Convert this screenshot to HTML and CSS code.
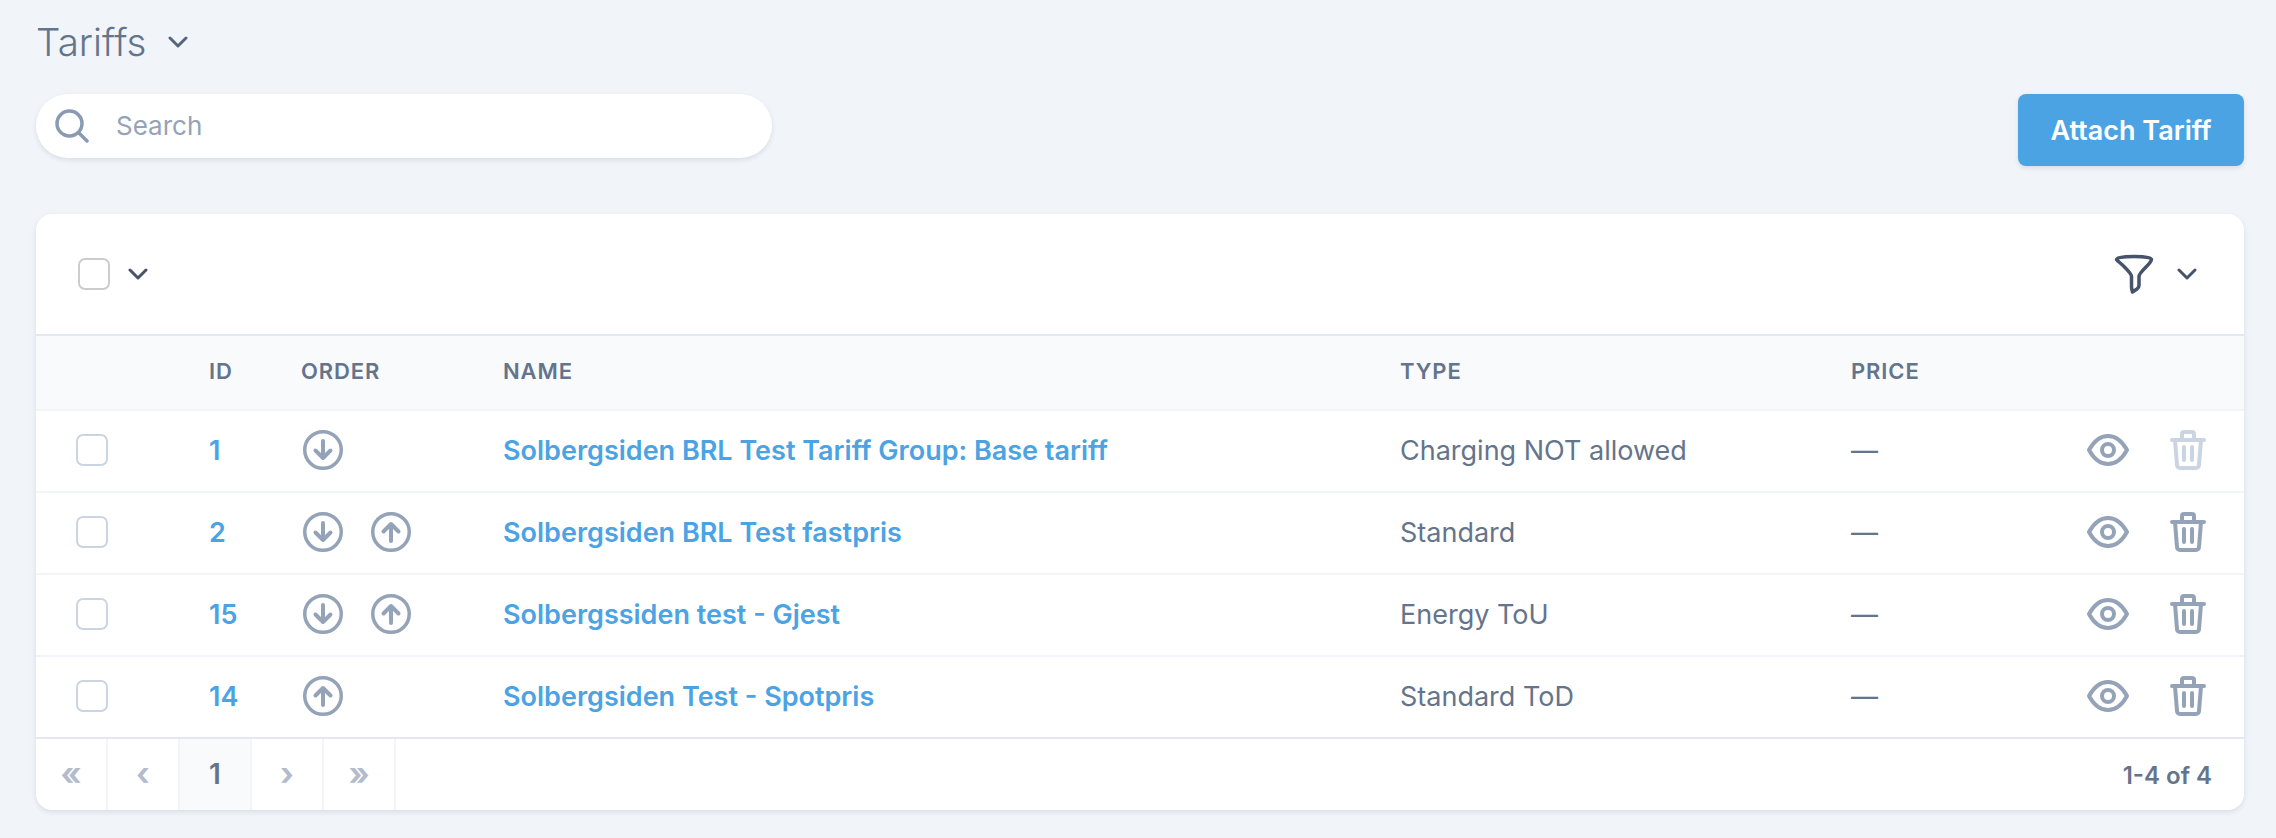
FILE: index.html
```html
<!DOCTYPE html>
<html lang="en">
<head>
<meta charset="utf-8">
<title>Tariffs</title>
<link rel="stylesheet" href="styles.css">
</head>
<body>
<svg class="defs" width="0" height="0" aria-hidden="true">
  <symbol id="down" viewBox="0 0 40 40"><circle cx="20" cy="20" r="18.250" fill="none" stroke="currentColor" stroke-width="3.500"/><path d="M20 11v17M12.500 20.500 20 28l7.500-7.500" fill="none" stroke="currentColor" stroke-width="4" stroke-linecap="round" stroke-linejoin="round"/></symbol>
  <symbol id="up" viewBox="0 0 40 40"><circle cx="20" cy="20" r="18.250" fill="none" stroke="currentColor" stroke-width="3.500"/><path d="M20 29V12M12.500 19.500 20 12l7.500 7.500" fill="none" stroke="currentColor" stroke-width="4" stroke-linecap="round" stroke-linejoin="round"/></symbol>
  <symbol id="eye" viewBox="0 0 42 32"><path d="M2 16C7 7 13 2 21 2s14 5 19 14c-5 9-11 14-19 14S7 25 2 16z" fill="none" stroke="currentColor" stroke-width="4" stroke-linejoin="round"/><circle cx="21" cy="16" r="6" fill="none" stroke="currentColor" stroke-width="4"/></symbol>
  <symbol id="trash" viewBox="0 0 36 40"><path d="M2 10h32M12 9V4a2 2 0 0 1 2-2h8a2 2 0 0 1 2 2v5M5 10l2 25a3 3 0 0 0 3 3h16a3 3 0 0 0 3-3l2-25M14 17v13M22 17v13" fill="none" stroke="currentColor" stroke-width="4" stroke-linecap="round" stroke-linejoin="round"/></symbol>
  <symbol id="chev" viewBox="0 0 20 12"><path d="M2 2l8 8 8-8" fill="none" stroke="currentColor" stroke-width="3" stroke-linecap="round" stroke-linejoin="round"/></symbol>
</svg>

<header class="title-row">
  <h1 class="title">Tariffs</h1>
  <svg class="title-chev"><use href="#chev"/></svg>
</header>

<div class="action-row">
  <label class="search">
    <svg class="search-icon" viewBox="0 0 34 34"><circle cx="14.500" cy="14.500" r="12.500" fill="none" stroke="currentColor" stroke-width="3.500"/><path d="M23.500 23.500 32 32" fill="none" stroke="currentColor" stroke-width="3.500" stroke-linecap="round"/></svg>
    <input class="search-input" type="text" placeholder="Search">
  </label>
  <button class="attach" type="button">Attach Tariff</button>
</div>

<section class="card">
  <div class="toolbar">
    <div class="toolbar-side">
      <span class="check"></span>
      <svg class="tool-chev"><use href="#chev"/></svg>
    </div>
    <div class="toolbar-side filter-side">
      <svg class="filter" viewBox="0 0 40 40"><path d="M2.500 5.500C2.500 3.500 9 2.500 20 2.500s17.500 1 17.500 3c0 2-2 4-5.500 7.500-4 4-7 7-7 9.500v9c0 1.500-.5 2.500-2 3.500l-4.500 3c-.5-2-1-3.500-1-5.500v-10c0-2.500-3-5.500-7-9.500-3.500-3.500-7-6-8-7.500z" fill="none" stroke="currentColor" stroke-width="3.500" stroke-linejoin="round"/></svg>
      <svg class="tool-chev"><use href="#chev"/></svg>
    </div>
  </div>

  <table class="grid">
    <colgroup>
      <col class="c-check"><col class="c-id"><col class="c-order"><col class="c-name"><col class="c-type"><col class="c-price"><col class="c-act">
    </colgroup>
    <thead>
      <tr><th></th><th>ID</th><th>ORDER</th><th>NAME</th><th>TYPE</th><th>PRICE</th><th></th></tr>
    </thead>
    <tbody>
      <tr>
        <td><span class="check row-check"></span></td>
        <td><a class="id">1</a></td>
        <td><div class="order"><svg class="ico"><use href="#down"/></svg></div></td>
        <td><a class="name">Solbergsiden BRL Test Tariff Group: Base tariff</a></td>
        <td>Charging NOT allowed</td>
        <td>—</td>
        <td><div class="acts"><svg class="eye"><use href="#eye"/></svg><svg class="trash off"><use href="#trash"/></svg></div></td>
      </tr>
      <tr>
        <td><span class="check row-check"></span></td>
        <td><a class="id">2</a></td>
        <td><div class="order"><svg class="ico"><use href="#down"/></svg><svg class="ico"><use href="#up"/></svg></div></td>
        <td><a class="name">Solbergsiden BRL Test fastpris</a></td>
        <td>Standard</td>
        <td>—</td>
        <td><div class="acts"><svg class="eye"><use href="#eye"/></svg><svg class="trash"><use href="#trash"/></svg></div></td>
      </tr>
      <tr>
        <td><span class="check row-check"></span></td>
        <td><a class="id">15</a></td>
        <td><div class="order"><svg class="ico"><use href="#down"/></svg><svg class="ico"><use href="#up"/></svg></div></td>
        <td><a class="name">Solbergssiden test - Gjest</a></td>
        <td>Energy ToU</td>
        <td>—</td>
        <td><div class="acts"><svg class="eye"><use href="#eye"/></svg><svg class="trash"><use href="#trash"/></svg></div></td>
      </tr>
      <tr>
        <td><span class="check row-check"></span></td>
        <td><a class="id">14</a></td>
        <td><div class="order"><svg class="ico"><use href="#up"/></svg></div></td>
        <td><a class="name">Solbergsiden Test - Spotpris</a></td>
        <td>Standard ToD</td>
        <td>—</td>
        <td><div class="acts"><svg class="eye"><use href="#eye"/></svg><svg class="trash"><use href="#trash"/></svg></div></td>
      </tr>
    </tbody>
  </table>

  <footer class="pager">
    <nav class="pages">
      <span class="page dim">«</span>
      <span class="page dim">‹</span>
      <span class="page current">1</span>
      <span class="page dim">›</span>
      <span class="page dim">»</span>
    </nav>
    <span class="count">1-4 of 4</span>
  </footer>
</section>
</body>
</html>
```

FILE: styles.css
```css
* { box-sizing: border-box; }
html, body { margin: 0; height: 100%; }
body {
  background: #f1f5fa;
  color: #64748b;
  font-family: Inter, "Noto Sans", sans-serif;
  padding: 0 32px 0 36px;
  overflow: hidden;
}
.defs { position: absolute; }
.title-row { display: flex; align-items: center; height: 84px; gap: 22px; }
.title { margin: 0; font-size: 38.500px; font-weight: 300; color: #64748b; line-height: 1; }
.title-chev { width: 20px; height: 12px; color: #56657e; }

.action-row { display: flex; justify-content: space-between; align-items: flex-start; height: 130px; padding-top: 10px; }
.search {
  display: flex; align-items: center; width: 736px; height: 64px;
  background: #fff; border-radius: 32px;
  box-shadow: 0 2px 5px rgba(30, 50, 80, .12);
  padding-left: 19px;
}
.search-icon { width: 34px; height: 34px; color: #8a9ab3; flex: none; }
.search-input {
  border: 0; outline: 0; background: transparent; flex: 1;
  font: 400 26px Inter, sans-serif; margin-left: 27px; color: #64748b; padding: 0 0 2px;
}
.search-input::placeholder { color: #94a3b8; opacity: 1; }
.attach {
  width: 226px; height: 72px; border: 0; border-radius: 8px;
  background: #4ca3e4; color: #fff;
  font: 600 27px Inter, sans-serif;
  box-shadow: 0 2px 5px rgba(30, 50, 80, .12);
  padding: 0;
}

.card { background: #fff; border-radius: 16px; box-shadow: 0 2px 5px rgba(30, 50, 80, .12); overflow: hidden; height: 596px; }
.toolbar { display: flex; justify-content: space-between; align-items: center; height: 122px; border-bottom: 2px solid #e3e8f0; padding: 0 47px 0 42px; }
.toolbar-side { display: flex; align-items: center; gap: 18px; }
.filter-side { gap: 23px; }
.check { display: block; width: 32px; height: 32px; border: 2px solid #ccc; border-radius: 7px; background: #fff; }
.row-check { border-color: #cbd5e1; margin-left: 40px; }
.tool-chev { width: 20px; height: 12px; color: #46536a; }
.filter { width: 40px; height: 40px; color: #46536a; }

.grid { width: 100%; border-collapse: collapse; table-layout: fixed; font-size: 27px; }
.c-check { width: 173px; }
.c-id { width: 92px; }
.c-order { width: 202px; }
.c-name { width: 897px; }
.c-type { width: 451px; }
.c-price { width: 236px; }
th {
  height: 74px; background: #f8fafc; text-align: left; padding: 0 0 3px;
  font-size: 22px; font-weight: 600; letter-spacing: .9px; color: #64748b;
  border-bottom: 2px solid #f1f4f8;
}
td { height: 82px; padding: 0 0 2px; border-bottom: 2px solid #f1f4f8; color: #64748b; }
tbody tr:last-child td { border-bottom-color: #e3e8f0; }
.id, .name { color: #4ca3e4; font-weight: 600; }
.order { display: flex; gap: 28px; padding-left: 2px; }
.ico { width: 40px; height: 40px; color: #94a3b8; }
.acts { display: flex; align-items: center; gap: 41px; }
.eye { width: 42px; height: 32px; color: #94a3b8; }
.trash { width: 36px; height: 40px; color: #94a3b8; }
.off { color: #cbd5e1; }

.pager { display: flex; justify-content: space-between; align-items: stretch; height: 72px; padding-right: 32px; }
.pages { display: flex; }
.page {
  width: 72px; border-right: 2px solid #f1f4f8;
  display: flex; align-items: center; justify-content: center;
  font-size: 32px; font-weight: 700; padding-bottom: 4px;
}
.dim { color: #b4bccb; }
.current { background: #f8fafc; color: #64748b; font-size: 28px; font-weight: 600; padding-bottom: 2px; }
.count { align-self: center; font-size: 24px; font-weight: 600; color: #64748b; }
```
